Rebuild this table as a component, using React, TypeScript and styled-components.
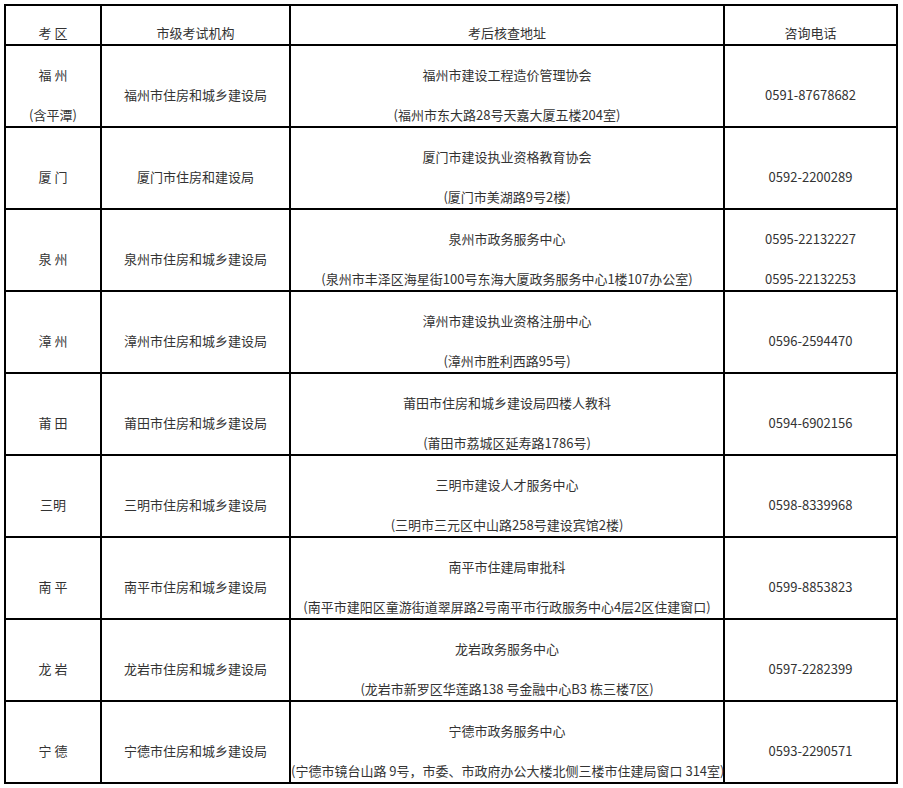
import React from "react";
import styled, { createGlobalStyle } from "styled-components";

const GlobalStyle = createGlobalStyle`
  html, body {
    margin: 0;
    padding: 0;
    background: #fff;
  }
  body {
    font-family: "Noto Sans CJK SC", "Noto Sans", sans-serif;
    color: #333;
  }
`;

const Page = styled.div`
  padding: 4px 0 0 4px;
`;

const Table = styled.table`
  border-collapse: separate;
  border-spacing: 0;
  table-layout: fixed;
  width: 894px;
  border-top: 2px solid #000;
  border-left: 2px solid #000;
  font-size: 13px;
  line-height: 20px;
`;

const HeadCell = styled.th<{ $w: number }>`
  box-sizing: border-box;
  width: ${(p) => p.$w}px;
  height: 40px;
  padding: 16px 0 0;
  border-right: 2px solid #000;
  border-bottom: 2px solid #000;
  font-weight: normal;
  text-align: center;
  vertical-align: middle;
  white-space: nowrap;
`;

const Cell = styled.td`
  box-sizing: border-box;
  height: 82px;
  padding: 18px 0 0;
  border-right: 2px solid #000;
  border-bottom: 2px solid #000;
  text-align: center;
  vertical-align: middle;
  white-space: nowrap;
  overflow: visible;
`;

const Line = styled.div`
  line-height: 20px;
  & + & {
    margin-top: 20px;
  }
`;

interface IRow {
  area: string[];
  office: string;
  address: string[];
  phones: string[];
}

const rows: IRow[] = [
  {
    area: ["福 州", "(含平潭)"],
    office: "福州市住房和城乡建设局",
    address: ["福州市建设工程造价管理协会", "(福州市东大路28号天嘉大厦五楼204室)"],
    phones: ["0591-87678682"],
  },
  {
    area: ["厦 门"],
    office: "厦门市住房和建设局",
    address: ["厦门市建设执业资格教育协会", "(厦门市美湖路9号2楼)"],
    phones: ["0592-2200289"],
  },
  {
    area: ["泉 州"],
    office: "泉州市住房和城乡建设局",
    address: ["泉州市政务服务中心", "(泉州市丰泽区海星街100号东海大厦政务服务中心1楼107办公室)"],
    phones: ["0595-22132227", "0595-22132253"],
  },
  {
    area: ["漳 州"],
    office: "漳州市住房和城乡建设局",
    address: ["漳州市建设执业资格注册中心", "(漳州市胜利西路95号)"],
    phones: ["0596-2594470"],
  },
  {
    area: ["莆 田"],
    office: "莆田市住房和城乡建设局",
    address: ["莆田市住房和城乡建设局四楼人教科", "(莆田市荔城区延寿路1786号)"],
    phones: ["0594-6902156"],
  },
  {
    area: ["三明"],
    office: "三明市住房和城乡建设局",
    address: ["三明市建设人才服务中心", "(三明市三元区中山路258号建设宾馆2楼)"],
    phones: ["0598-8339968"],
  },
  {
    area: ["南 平"],
    office: "南平市住房和城乡建设局",
    address: ["南平市住建局审批科", "(南平市建阳区童游街道翠屏路2号南平市行政服务中心4层2区住建窗口)"],
    phones: ["0599-8853823"],
  },
  {
    area: ["龙 岩"],
    office: "龙岩市住房和城乡建设局",
    address: ["龙岩政务服务中心", "(龙岩市新罗区华莲路138 号金融中心B3 栋三楼7区)"],
    phones: ["0597-2282399"],
  },
  {
    area: ["宁 德"],
    office: "宁德市住房和城乡建设局",
    address: ["宁德市政务服务中心", "(宁德市镜台山路 9号，市委、市政府办公大楼北侧三楼市住建局窗口 314室)"],
    phones: ["0593-2290571"],
  },
];

const Lines = ({ items }: { items: string[] }) => (
  <>
    {items.map((t) => (
      <Line key={t}>{t}</Line>
    ))}
  </>
);

export default function App() {
  return (
    <>
      <GlobalStyle />
      <Page>
        <Table>
          <thead>
            <tr>
              <HeadCell $w={96}>考 区</HeadCell>
              <HeadCell $w={189}>市级考试机构</HeadCell>
              <HeadCell $w={434}>考后核查地址</HeadCell>
              <HeadCell $w={173}>咨询电话</HeadCell>
            </tr>
          </thead>
          <tbody>
            {rows.map((r) => (
              <tr key={r.office}>
                <Cell>
                  <Lines items={r.area} />
                </Cell>
                <Cell>
                  <Line>{r.office}</Line>
                </Cell>
                <Cell>
                  <Lines items={r.address} />
                </Cell>
                <Cell>
                  <Lines items={r.phones} />
                </Cell>
              </tr>
            ))}
          </tbody>
        </Table>
      </Page>
    </>
  );
}
